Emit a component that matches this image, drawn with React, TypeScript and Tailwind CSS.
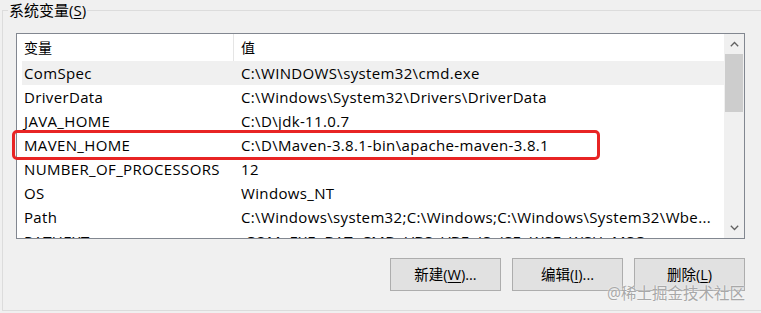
import React from "react";

const rows: [string, string][] = [
  ["ComSpec", "C:\\WINDOWS\\system32\\cmd.exe"],
  ["DriverData", "C:\\Windows\\System32\\Drivers\\DriverData"],
  ["JAVA_HOME", "C:\\D\\jdk-11.0.7"],
  ["MAVEN_HOME", "C:\\D\\Maven-3.8.1-bin\\apache-maven-3.8.1"],
  ["NUMBER_OF_PROCESSORS", "12"],
  ["OS", "Windows_NT"],
  ["Path", "C:\\Windows\\system32;C:\\Windows;C:\\Windows\\System32\\Wbe..."],
  ["PATHEXT", ".COM;.EXE;.BAT;.CMD;.VBS;.VBE;.JS;.JSE;.WSF;.WSH;.MSC"],
];

const font = { fontFamily: '"Open Sans", "Noto Sans CJK SC", sans-serif' };

export default function App() {
  return (
    <div
      className="relative w-[761px] h-[313px] overflow-hidden bg-[#f0f0f0] text-[14px] text-black"
      style={font}
    >
      <div className="relative ml-[2px] mt-[10px] h-[301px] border-t border-l border-b border-[#dcdcdc]">
        <div className="absolute left-[5px] top-[-12px] bg-[#f0f0f0] px-[1px] text-[15px] leading-[22px]">
          系统变量(<span className="underline underline-offset-2">S</span>)
        </div>
        <div className="ml-[13px] mt-[22px] flex h-[206px] w-[729px] border border-[#828790] bg-white">
          <div className="flex flex-1 flex-col overflow-hidden">
            <div className="flex h-[27px] shrink-0 items-center">
              <div className="w-[217px] shrink-0 border-r border-[#e5e5e5] pl-[7px] leading-[27px]">变量</div>
              <div className="pl-[7px]">值</div>
            </div>
            {rows.map(([k, v], i) => (
              <div
                key={k}
                className={`flex h-[24px] shrink-0 items-center ml-[5px] text-[15px] tracking-[0.35px] ${i === 0 ? "bg-[#f0f0f0]" : ""}`}
              >
                <div className="w-[219px] shrink-0 whitespace-nowrap pl-[2px]">{k}</div>
                <div className="whitespace-nowrap">{v}</div>
              </div>
            ))}
          </div>
          <div className="flex w-[20px] shrink-0 flex-col bg-[#f0f0f0]">
            <div className="flex h-[20px] items-center justify-center">
              <svg width="9" height="6" viewBox="0 0 9 6">
                <path d="M0.8 5.2 L4.5 1.5 L8.2 5.2" fill="none" stroke="#606060" strokeWidth="1.3" />
              </svg>
            </div>
            <div className="mx-[1px] h-[58px] bg-[#cdcdcd]" />
            <div className="flex-1" />
            <div className="flex h-[20px] items-center justify-center">
              <svg width="9" height="6" viewBox="0 0 9 6">
                <path d="M0.8 0.8 L4.5 4.5 L8.2 0.8" fill="none" stroke="#606060" strokeWidth="1.3" />
              </svg>
            </div>
          </div>
        </div>
        <div className="mt-[19px] mr-[16px] flex justify-end gap-[11px] text-[14.5px]">
          <button className="h-[33px] w-[111px] border border-[#adadad] bg-[#e1e1e1]">
            新建(<span className="underline underline-offset-2">W</span>)...
          </button>
          <button className="h-[33px] w-[111px] border border-[#adadad] bg-[#e1e1e1]">
            编辑(<span className="underline underline-offset-2">I</span>)...
          </button>
          <button className="h-[33px] w-[111px] border border-[#adadad] bg-[#e1e1e1]">
            删除(<span className="underline underline-offset-2">L</span>)
          </button>
        </div>
      </div>
      <div className="absolute left-[12px] top-[130px] h-[30px] w-[588px] rounded-[5px] border-[3px] border-[#e82424]" />
      <div className="absolute left-[607px] top-[282px] whitespace-nowrap text-[15.5px] leading-[22px] text-[#a8a8a8] [text-shadow:0_0_2px_#ffffff]">
        @稀土掘金技术社区
      </div>
    </div>
  );
}
